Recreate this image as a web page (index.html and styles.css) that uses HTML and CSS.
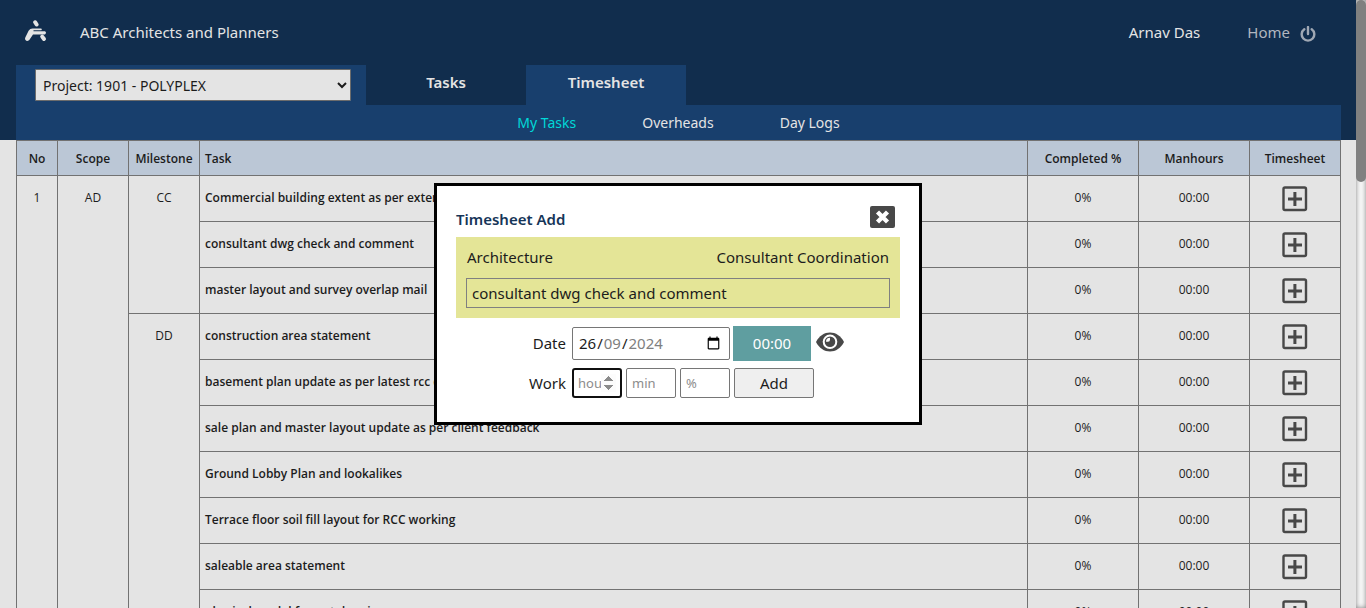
FILE: index.html
```html
<!DOCTYPE html>
<html lang="en-GB">
<head>
<meta charset="utf-8">
<title>Timesheet - ABC Architects and Planners</title>
<link rel="stylesheet" href="styles.css">
</head>
<body>
<svg class="sprite" aria-hidden="true">
  <symbol id="icon-plus" viewBox="0 0 26 26">
    <rect x="1.5" y="1.5" width="22.5" height="22.5" rx="1.5" fill="none" stroke="currentColor" stroke-width="2.4"/>
    <path d="M12.9 6v14M6 13h14" fill="none" stroke="currentColor" stroke-width="3"/>
  </symbol>
</svg>
<div class="shell">
<div class="page">
  <header class="banner">
    <div class="topbar">
      <svg class="logo" viewBox="0 0 22 22" aria-hidden="true">
        <path d="M10.200 2.300l1.400 2.200" fill="none" stroke="currentColor" stroke-width="4" stroke-linecap="round"/>
        <path d="M.3 17.600L3.600 10.800Q5 8.400 7.500 8.400H16.200Q17.400 9.400 16.200 10.300H8.500V11.200H20Q22 12.800 20 14.400H8L4.300 20Q2 21.600.700 20.300Q-.4 19.300.300 17.600z" fill="currentColor"/>
        <path d="M17.200 16.600L19 19" fill="none" stroke="currentColor" stroke-width="4" stroke-linecap="round"/>
      </svg>
      <span class="company">ABC Architects and Planners</span>
      <span class="user">Arnav Das</span>
      <a class="home" href="#">Home</a>
      <a class="power" href="#" aria-label="Log out">
        <svg viewBox="0 0 16 16" aria-hidden="true"><path d="M4.300 3.200A6.300 6.300 0 1 0 11.700 3.200M8 1v7" fill="none" stroke="currentColor" stroke-width="2.400" stroke-linecap="round"/></svg>
      </a>
    </div>
    <nav class="tabs">
      <div class="project">
        <select aria-label="Project"><option>Project: 1901 - POLYPLEX</option></select>
      </div>
      <a class="tab" href="#">Tasks</a>
      <a class="tab tab-active" href="#">Timesheet</a>
    </nav>
    <nav class="subtabs">
      <a class="subtab-active" href="#">My Tasks</a>
      <a href="#">Overheads</a>
      <a href="#">Day Logs</a>
    </nav>
  </header>
  <main class="content">
    <table class="tasks">
      <colgroup><col class="col-no"><col class="col-mid"><col class="col-mid"><col><col class="col-num"><col class="col-num"><col class="col-add"></colgroup>
      <thead>
        <tr><th>No</th><th>Scope</th><th>Milestone</th><th class="task">Task</th><th>Completed %</th><th>Manhours</th><th>Timesheet</th></tr>
      </thead>
      <tbody>
        <tr><td rowspan="10">1</td><td rowspan="10">AD</td><td rowspan="3">CC</td><td class="task">Commercial building extent as per extended plan</td><td>0%</td><td>00:00</td><td class="act"><button class="add" aria-label="Add time"><svg><use href="#icon-plus"/></svg></button></td></tr>
        <tr><td class="task">consultant dwg check and comment</td><td>0%</td><td>00:00</td><td class="act"><button class="add" aria-label="Add time"><svg><use href="#icon-plus"/></svg></button></td></tr>
        <tr><td class="task">master layout and survey overlap mail</td><td>0%</td><td>00:00</td><td class="act"><button class="add" aria-label="Add time"><svg><use href="#icon-plus"/></svg></button></td></tr>
        <tr><td rowspan="7">DD</td><td class="task">construction area statement</td><td>0%</td><td>00:00</td><td class="act"><button class="add" aria-label="Add time"><svg><use href="#icon-plus"/></svg></button></td></tr>
        <tr><td class="task">basement plan update as per latest rcc drawing</td><td>0%</td><td>00:00</td><td class="act"><button class="add" aria-label="Add time"><svg><use href="#icon-plus"/></svg></button></td></tr>
        <tr><td class="task">sale plan and master layout update as per client feedback</td><td>0%</td><td>00:00</td><td class="act"><button class="add" aria-label="Add time"><svg><use href="#icon-plus"/></svg></button></td></tr>
        <tr><td class="task">Ground Lobby Plan and lookalikes</td><td>0%</td><td>00:00</td><td class="act"><button class="add" aria-label="Add time"><svg><use href="#icon-plus"/></svg></button></td></tr>
        <tr><td class="task">Terrace floor soil fill layout for RCC working</td><td>0%</td><td>00:00</td><td class="act"><button class="add" aria-label="Add time"><svg><use href="#icon-plus"/></svg></button></td></tr>
        <tr><td class="task">saleable area statement</td><td>0%</td><td>00:00</td><td class="act"><button class="add" aria-label="Add time"><svg><use href="#icon-plus"/></svg></button></td></tr>
        <tr><td class="task">physical model format drawing</td><td>0%</td><td>00:00</td><td class="act"><button class="add" aria-label="Add time"><svg><use href="#icon-plus"/></svg></button></td></tr>
      </tbody>
    </table>
  </main>
</div>
<div class="scrollbar" aria-hidden="true"><div class="scrollbar-thumb"></div></div>
</div>

<div class="overlay">
  <section class="modal" role="dialog" aria-labelledby="modal-title">
    <div class="modal-head">
      <h2 id="modal-title">Timesheet Add</h2>
      <button class="close" aria-label="Close">
        <svg viewBox="0 0 25 22" aria-hidden="true"><rect width="25" height="22" rx="2" fill="#484848"/><path d="M7.500 6l10 10M17.500 6l-10 10" fill="none" stroke="#fff" stroke-width="4.400"/></svg>
      </button>
    </div>
    <div class="summary">
      <div class="summary-row"><span>Architecture</span><span>Consultant Coordination</span></div>
      <div class="summary-task">consultant dwg check and comment</div>
    </div>
    <form class="entry">
      <label for="date">Date</label>
      <div class="fields">
        <input class="date" id="date" type="date" value="2024-09-26">
        <output class="total">00:00</output>
        <button class="view" type="button" aria-label="View day">
          <svg viewBox="0 0 28 20" aria-hidden="true"><path d="M0 10C3 3.800 8.500.500 14 .500S25 3.800 28 10C25 16.200 19.500 19.500 14 19.500S3 16.200 0 10z" fill="#484848"/><circle cx="14" cy="9.800" r="7.300" fill="#fff"/><circle cx="14" cy="9.800" r="5.300" fill="#484848"/><path d="M10 9.800A4 4 0 0 1 14 5.800V7.800A2 2 0 0 1 12 9.800z" fill="#fff"/></svg>
        </button>
      </div>
      <label for="hours">Work</label>
      <div class="fields">
        <input class="num hours" id="hours" type="number" placeholder="hours" autofocus>
        <input class="num" type="number" placeholder="min" aria-label="Minutes">
        <input class="num" type="number" placeholder="%" aria-label="Percent">
        <button class="submit" type="button">Add</button>
      </div>
    </form>
  </section>
</div>
</body>
</html>
```
FILE: styles.css
```css
* {
  box-sizing: border-box;
}

body {
  margin: 0;
  font: 15px/20px "Noto Sans", "Open Sans", sans-serif;
  color: #1c1c1c;
  background: #e4e4e4;
}

a {
  color: inherit;
  text-decoration: none;
}

button,
input,
select {
  font: inherit;
  color: inherit;
}

button {
  padding: 0;
  border: 0;
  background: none;
}

.sprite {
  display: none;
}

.shell {
  display: flex;
  height: 100vh;
}

.page {
  flex: 1;
  overflow-y: auto;
  scrollbar-width: none;
}

.scrollbar {
  width: 10px;
  background: #f8f8f8;
  box-shadow: inset 0 0 5px #808080;
}

.scrollbar-thumb {
  height: 30%;
  background: #808080;
  border-radius: 5px;
}

/* Banner */

.banner {
  padding: 0 15px 0 16px;
  background: #112d4d;
  color: #e4e4e4;
}

.topbar {
  display: flex;
  align-items: center;
  height: 65px;
  padding: 0 25px 2px 9px;
}

.logo {
  width: 22px;
  height: 22px;
  margin: 0 33px 1px 0;
}

.user {
  margin-left: auto;
}

.home {
  margin-left: 47px;
  color: #b0b6bf;
}

.power {
  display: flex;
  margin: 4px 0 0 10px;
  color: #a0a8b4;
}

.power svg {
  width: 16px;
  height: 16px;
}

.tabs {
  display: flex;
  height: 40px;
  font-weight: 600;
}

.project {
  width: 350px;
  padding: 4px 15px 0 19px;
  background: #183f6d;
  font-weight: 400;
}

.project select {
  width: 100%;
  height: 32px;
  padding: 0 3px;
  border: 1px solid #6c6c6c;
  border-radius: 1px;
  background: #e4e4e4;
  color: #1c1c1c;
  font-size: 14px;
}

.tab {
  width: 160px;
  padding-top: 7px;
  text-align: center;
}

.tab-active {
  background: #183f6d;
}

.subtabs {
  display: flex;
  justify-content: center;
  gap: 66px;
  height: 35px;
  padding-top: 8px;
  background: #183f6d;
  font-size: 14px;
}

.subtab-active {
  color: #00d8d8;
}

/* Task table */

.content {
  min-height: 1900px;
  padding: 0 15px 0 16px;
}

.tasks {
  width: 100%;
  table-layout: fixed;
  border-collapse: collapse;
  font: 12px/16px "Open Sans", "Noto Sans", sans-serif;
  text-align: center;
}

.col-no {
  width: 41px;
}

.col-mid {
  width: 71px;
}

.col-num {
  width: 111px;
}

.col-add {
  width: 91px;
}

.tasks th,
.tasks td {
  border: 1px solid #727272;
}

.tasks th {
  height: 35px;
  padding: 2px 0 0;
  background: #bbc7d6;
  font-weight: 600;
}

.tasks td {
  height: 46px;
  padding: 14px 0 0;
  vertical-align: top;
}

.tasks .task {
  padding-left: 5px;
  text-align: left;
  font-weight: 600;
}

.tasks .act {
  padding-top: 10px;
}

.add {
  color: #484848;
}

.add svg {
  display: block;
  width: 26px;
  height: 26px;
}

/* Timesheet dialog */

.overlay {
  position: fixed;
  inset: 0 10px 0 0;
  display: flex;
  align-items: center;
  justify-content: center;
}

.modal {
  width: 488px;
  padding: 20px 19px 24px;
  border: 3px solid #000;
  background: #fff;
}

.modal-head {
  display: flex;
  justify-content: space-between;
  height: 31px;
  padding: 0 5px 0 0;
}

.modal-head h2 {
  margin: 3px 0 0;
  color: #163558;
  font-size: 15px;
  font-weight: 600;
}

.close svg {
  display: block;
  width: 25px;
  height: 22px;
}

.close {
  align-self: flex-start;
}

.summary {
  padding: 10px;
  background: #e4e597;
}

.summary-row {
  display: flex;
  justify-content: space-between;
  padding: 0 1px;
}

.summary-task {
  margin-top: 11px;
  padding: 4px 5px;
  border: 1px solid #808080;
}

.entry {
  display: grid;
  grid-template-columns: 110px 1fr;
  gap: 7px 6px;
  align-items: center;
  margin-top: 8px;
}

.entry label {
  padding-bottom: 1px;
  text-align: right;
}

.fields {
  display: flex;
  align-items: center;
  gap: 4px;
}

.date,
.num {
  border: 1px solid #767676;
  border-radius: 2px;
  background: #fff;
}

.date {
  width: 158px;
  height: 33px;
  padding: 0 6px 1px;
  margin-right: -1px;
}

.date::-webkit-datetime-edit {
  padding: 0;
}

/* Day first, whatever order the browser's locale gives */
.date::-webkit-datetime-edit-fields-wrapper {
  display: inline-grid;
  grid-auto-flow: column;
  padding: 0;
}

.date::-webkit-datetime-edit-day-field {
  grid-area: 1 / 1;
  padding: 0;
}

.date::-webkit-datetime-edit-month-field {
  grid-area: 1 / 3;
  padding: 0;
  color: #808080;
}

.date::-webkit-datetime-edit-year-field {
  grid-area: 1 / 5;
  padding: 0;
  color: #808080;
}

.date::-webkit-datetime-edit-text {
  grid-row: 1;
  padding: 0 1px;
}

.total {
  width: 78px;
  padding: 7px 0 8px;
  background: #5f9ea0;
  color: #fff;
  text-align: center;
}

.view {
  margin: 0 0 4px 1px;
}

.view svg {
  display: block;
  width: 28px;
  height: 20px;
}

.num {
  width: 50px;
  height: 30px;
  padding: 0 5px;
  font-size: 13px;
}

.num::placeholder {
  color: #8c8c8c;
}

.num:focus {
  border: 2px solid #101010;
  border-radius: 3px;
  padding: 0 4px;
  outline: 0;
}

.hours::-webkit-inner-spin-button {
  opacity: 1;
}

.submit {
  width: 80px;
  height: 30px;
  border: 1px solid #767676;
  border-radius: 2px;
  background: #efefef;
}
```
